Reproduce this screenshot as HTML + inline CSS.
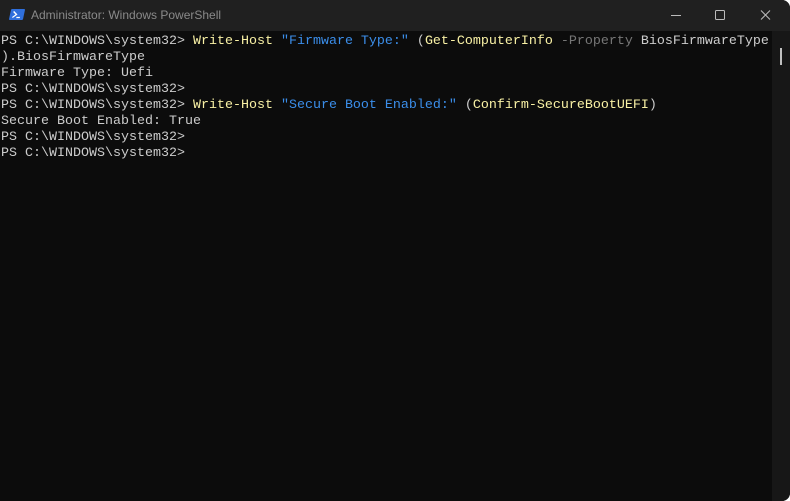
<!DOCTYPE html>
<html><head><style>
html,body{margin:0;padding:0;width:790px;height:501px;overflow:hidden;background:#fff;}
.win{position:absolute;left:0;top:0;width:790px;height:501px;background:#0c0c0c;border-radius:0 8px 8px 0;overflow:hidden;}
.title{position:absolute;left:0;top:0;width:790px;height:31px;background:#202020;}
.title .t{position:absolute;left:31px;top:8px;font:12px "Liberation Sans",sans-serif;color:#8a8a8a;}
.icon{position:absolute;left:10px;top:9px;width:14px;height:11px;background:#2f6fdc;border-radius:1px;transform:skewX(-12deg);}
.term{position:absolute;left:1px;top:34px;font:13.33px/16px "Liberation Mono",monospace;color:#cccccc;white-space:pre;}
.y{color:#f9f1a5}.b{color:#3b8eea}.g{color:#767676}
.sb{position:absolute;left:772px;top:31px;width:18px;height:470px;background:#171717;}
.thumb{position:absolute;left:780px;top:48px;width:2px;height:17px;background:#c0c0c0;}
</style></head><body>
<div class="win">
<div class="title">
<div class="icon"><svg width="14" height="11" style="position:absolute;left:0;top:0"><path d="M3 2.5L6.5 5.5L3 8.5" stroke="#fff" stroke-width="1.3" fill="none"/><path d="M7 8.5h3.5" stroke="#fff" stroke-width="1.2"/></svg></div>
<div class="t">Administrator: Windows PowerShell</div>
<svg style="position:absolute;left:665px;top:10px" width="110" height="12">
<path d="M6 5.5h10" stroke="#bbb" stroke-width="1"/>
<rect x="50.5" y="0.5" width="9" height="9" stroke="#bbb" fill="none" rx="1"/>
<path d="M96 0.5l9 9M105 0.5l-9 9" stroke="#bbb" stroke-width="1"/>
</svg>
</div>
<div class="term">PS C:\WINDOWS\system32> <span class="y">Write-Host</span> <span class="b">"Firmware Type:"</span> (<span class="y">Get-ComputerInfo</span> <span class="g">-Property</span> BiosFirmwareType
).BiosFirmwareType
Firmware Type: Uefi
PS C:\WINDOWS\system32>
PS C:\WINDOWS\system32> <span class="y">Write-Host</span> <span class="b">"Secure Boot Enabled:"</span> (<span class="y">Confirm-SecureBootUEFI</span>)
Secure Boot Enabled: True
PS C:\WINDOWS\system32>
PS C:\WINDOWS\system32></div>
<div class="sb"></div>
<div class="thumb"></div>
</div>
</body></html>
